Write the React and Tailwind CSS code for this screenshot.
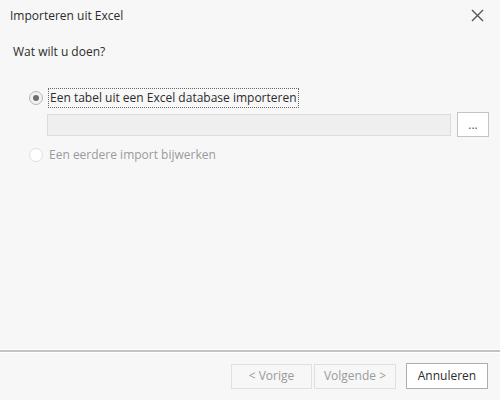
export default function App() {
  return (
    <div className="w-[500px] h-[400px] bg-[#f7f7f7] flex flex-col text-[12px] text-[#2b2b2b]" style={{ fontFamily: '"Open Sans", "Noto Sans", sans-serif' }}>
      <div className="h-[30px] flex items-start justify-between pl-[10px] pr-[16px] pt-[7px]">
        <span>Importeren uit Excel</span>
        <svg width="13" height="13" viewBox="0 0 13 13" className="mt-[2px]">
          <path d="M1 1 L12 12 M12 1 L1 12" stroke="#555" strokeWidth="1.4" fill="none" />
        </svg>
      </div>
      <div className="pl-[13px] pt-[14px] leading-[16px]">Wat wilt u doen?</div>
      <div className="pl-[29px] pr-[11px] pt-[28px] flex flex-col">
        <div className="flex items-center h-[20px]">
          <span className="w-[14px] h-[14px] rounded-full border border-[#b5b5b5] bg-[#f2f2f2] flex items-center justify-center">
            <span className="w-[6px] h-[6px] rounded-full bg-[#6e6e6e]" />
          </span>
          <span className="ml-[5px] h-[20px] px-[1px] flex items-center border border-dotted border-[#666] leading-[16px]">Een tabel uit een Excel database importeren</span>
        </div>
        <div className="flex items-center mt-[4px] pl-[18px]">
          <div className="flex-1 h-[22px] bg-[#efefef] border border-[#dcdcdc]" />
          <button className="ml-[6px] w-[32px] h-[25px] bg-white border border-[#c4c4c4] text-[#555] leading-[16px]">...</button>
        </div>
        <div className="flex items-center h-[20px] mt-[8px]">
          <span className="w-[14px] h-[14px] rounded-full border border-[#e0e0e0] bg-white" />
          <span className="ml-[6px] text-[#9a9a9a] leading-[16px]">Een eerdere import bijwerken</span>
        </div>
      </div>
      <div className="flex-1" />
      <div className="h-[1px] bg-white" />
      <div className="h-[2px] bg-[#c3c3c3]" />
      <div className="h-[1px] bg-white" />
      <div className="flex justify-end items-center gap-[2px] pr-[12px] pt-[10px] pb-[11px]">
        <button className="w-[81px] h-[25px] border border-[#e0e0e0] bg-[#f7f7f7] text-[#9a9a9a] leading-[16px]">&lt; Vorige</button>
        <button className="w-[82px] h-[25px] border border-[#e0e0e0] bg-[#f7f7f7] text-[#9a9a9a] leading-[16px]">Volgende &gt;</button>
        <button className="ml-[8px] w-[82px] h-[26px] border border-[#adadad] bg-white leading-[16px]">Annuleren</button>
      </div>
    </div>
  );
}
